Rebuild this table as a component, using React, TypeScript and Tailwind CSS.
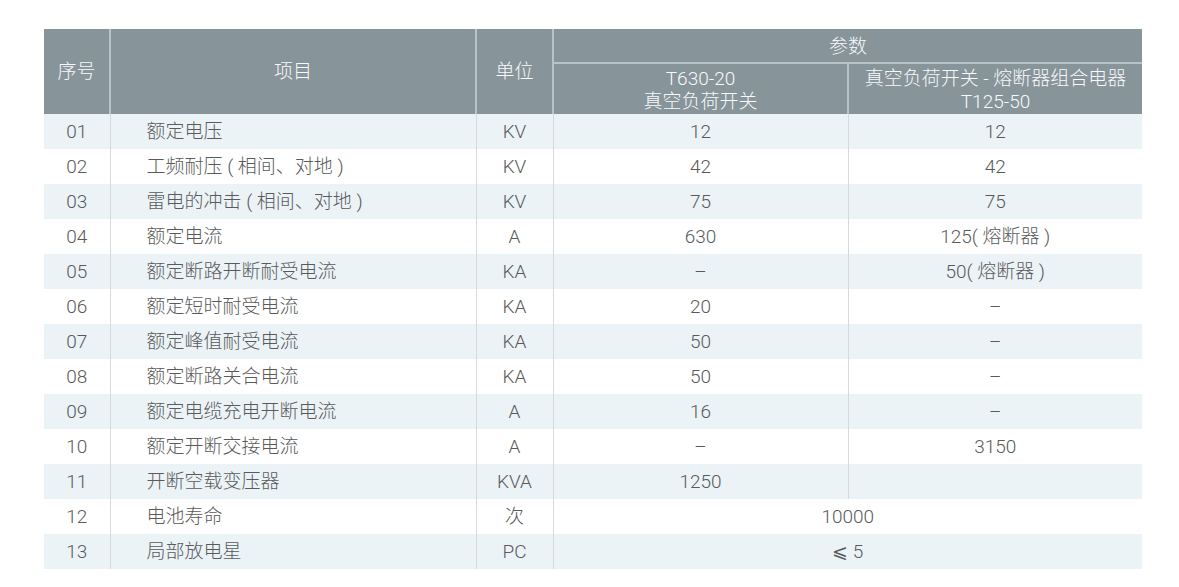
import React from "react";

type Row = {
  no: string;
  item: string;
  unit: string;
  a: string;
  b?: string;
  span?: boolean;
};

const rows: Row[] = [
  { no: "01", item: "额定电压", unit: "KV", a: "12", b: "12" },
  { no: "02", item: "工频耐压 ( 相间、对地 )", unit: "KV", a: "42", b: "42" },
  { no: "03", item: "雷电的冲击 ( 相间、对地 )", unit: "KV", a: "75", b: "75" },
  { no: "04", item: "额定电流", unit: "A", a: "630", b: "125( 熔断器 )" },
  { no: "05", item: "额定断路开断耐受电流", unit: "KA", a: "–", b: "50( 熔断器 )" },
  { no: "06", item: "额定短时耐受电流", unit: "KA", a: "20", b: "–" },
  { no: "07", item: "额定峰值耐受电流", unit: "KA", a: "50", b: "–" },
  { no: "08", item: "额定断路关合电流", unit: "KA", a: "50", b: "–" },
  { no: "09", item: "额定电缆充电开断电流", unit: "A", a: "16", b: "–" },
  { no: "10", item: "额定开断交接电流", unit: "A", a: "–", b: "3150" },
  { no: "11", item: "开断空载变压器", unit: "KVA", a: "1250", b: "" },
  { no: "12", item: "电池寿命", unit: "次", a: "10000", span: true },
  { no: "13", item: "局部放电星", unit: "PC", a: "⩽ 5", span: true },
];

const font = {
  fontFamily: '"Roboto", "Noto Sans CJK SC", sans-serif',
};

export default function App() {
  return (
    <div className="min-h-screen bg-white pt-[29px] pl-[44px]" style={font}>
      <table className="w-[1098px] table-fixed border-collapse text-[19px] font-light">
        <colgroup>
          <col className="w-[66px]" />
          <col className="w-[366px]" />
          <col className="w-[77px]" />
          <col className="w-[295px]" />
          <col className="w-[294px]" />
        </colgroup>
        <thead className="bg-[#87949a] text-[#f7f9fa]">
          <tr className="h-[34px]">
            <th rowSpan={2} className="border-r-2 border-[#b9c2c6] pt-[2px] text-center font-light">
              序号
            </th>
            <th rowSpan={2} className="border-x-2 border-[#b9c2c6] pt-[2px] text-center font-light">
              项目
            </th>
            <th rowSpan={2} className="border-x-2 border-[#b9c2c6] pt-[2px] text-center font-light">
              单位
            </th>
            <th colSpan={2} className="border-b-2 border-l-2 border-[#b9c2c6] pt-[4px] text-center font-light">
              参数
            </th>
          </tr>
          <tr className="h-[51px]">
            <th className="border-x-2 border-[#b9c2c6] pt-[1px] text-center font-light leading-[23px]">
              T630-20
              <br />
              真空负荷开关
            </th>
            <th className="border-l-2 border-[#b9c2c6] pt-[1px] text-center font-light leading-[23px]">
              真空负荷开关 - 熔断器组合电器
              <br />
              T125-50
            </th>
          </tr>
        </thead>
        <tbody className="text-[#5a5a5a]">
          {rows.map((r, i) => (
            <tr key={r.no} className={i % 2 === 0 ? "h-[35px] bg-[#ebf3f7]" : "h-[35px] bg-white"}>
              <td className="border-r border-[#d6dadc] pt-[2px] text-center">{r.no}</td>
              <td className="border-x border-[#d6dadc] pt-[2px] pl-[36px] text-left">{r.item}</td>
              <td className="border-x border-[#d6dadc] pt-[2px] text-center">{r.unit}</td>
              {r.span ? (
                <td colSpan={2} className="border-l border-[#d6dadc] pt-[2px] text-center">
                  {r.a}
                </td>
              ) : (
                <>
                  <td className="border-x border-[#d6dadc] pt-[2px] text-center">{r.a}</td>
                  <td className="border-l border-[#d6dadc] pt-[2px] text-center">{r.b}</td>
                </>
              )}
            </tr>
          ))}
        </tbody>
      </table>
    </div>
  );
}
